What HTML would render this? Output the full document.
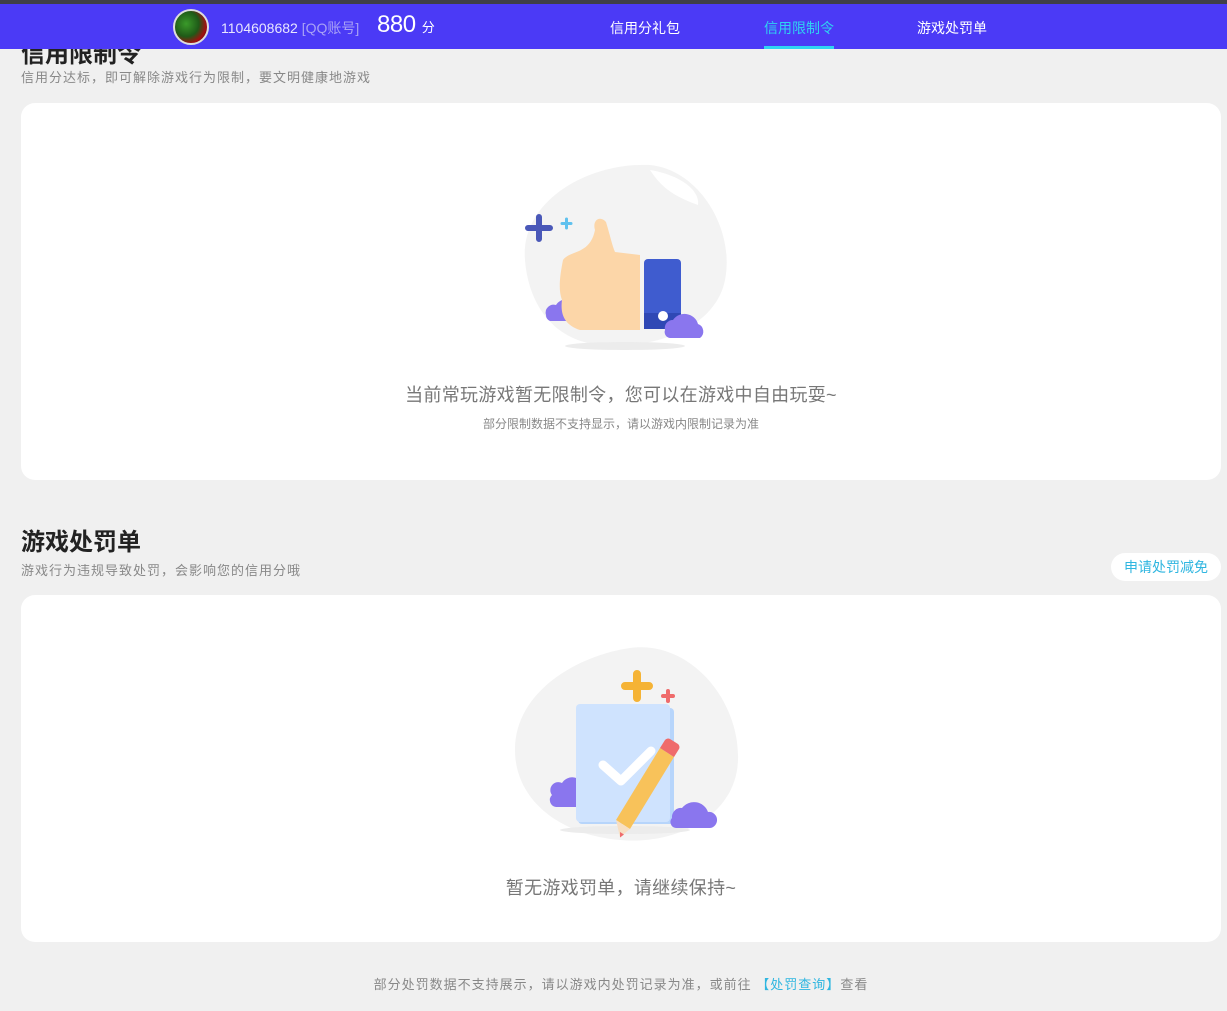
<!DOCTYPE html>
<html><head><meta charset="utf-8">
<style>
*{margin:0;padding:0;box-sizing:border-box}
body{width:1227px;height:1011px;background:#f0f0f0;font-family:"Liberation Sans","Noto Sans CJK SC",sans-serif;position:relative;overflow:hidden;color:#333}
.topbar{position:absolute;left:0;top:0;width:1227px;height:4px;background:#3f3f48;z-index:3}
.hdr{position:absolute;left:0;top:4px;width:1227px;height:45px;background:#4b3af6;z-index:2}
.av{position:absolute;left:173px;top:5px;width:36px;height:36px;border-radius:50%;border:2px solid #ddd;background:radial-gradient(circle at 35% 40%,#3a9a2a,#1f5a18 45%,#a01010 70%,#300 100%)}
.uid{position:absolute;left:221px;top:14px;font-size:14px;color:#e8e6ff}
.uid span{color:#a9a2f5}
.score{position:absolute;left:377px;top:7px;font-size:24px;color:#fff;letter-spacing:-0.5px}
.score small{font-size:13px}
.nav{position:absolute;top:14px;font-size:14px;color:#fff}
.nav.on{color:#2fd3f2}
.uline{position:absolute;left:764px;width:70px;height:3px;background:#2fd3f2}
.t1{position:absolute;left:21px;top:34px;font-size:24px;font-weight:bold;color:#222}
.sub{position:absolute;left:21px;font-size:13px;color:#888;letter-spacing:1px}
.card{position:absolute;left:21px;width:1200px;background:#fff;border-radius:14px}
.msg{position:absolute;width:1200px;left:21px;text-align:center;color:#777}
.btn{position:absolute;left:1111px;top:553px;width:110px;height:28px;border-radius:14px;background:#fff;color:#2fb6e0;font-size:14px;text-align:center;line-height:28px}
</style></head><body>
<div class="topbar"></div>
<div class="t1">信用限制令</div>
<div class="hdr">
  <div class="av"></div>
  <div class="uid">1104608682 <span>[QQ账号]</span></div>
  <div class="score">880 <small>分</small></div>
  <div class="nav" style="left:610px">信用分礼包</div>
  <div class="nav on" style="left:764px">信用限制令</div>
  <div class="nav" style="left:917px">游戏处罚单</div>
  <div class="uline" style="top:42px"></div>
</div>
<div class="sub" style="top:67px">信用分达标，即可解除游戏行为限制，要文明健康地游戏</div>
<div class="card" style="top:103px;height:377px"></div>
<svg style="position:absolute;left:500px;top:150px" width="240" height="210" viewBox="0 0 240 210">
  <path d="M25 110 C20 50 90 12 150 15 C200 20 235 80 225 130 C215 180 150 200 100 195 C50 190 28 150 25 110Z" fill="#f3f3f3"/>
  <path d="M150 20 C180 25 200 40 198 55 C170 45 160 35 150 20Z" fill="#fff"/>
  <ellipse cx="125" cy="196" rx="60" ry="4" fill="#ececec"/>
  <path d="M28 75 h8 v-8 a3 3 0 0 1 6 0 v8 h8 a3 3 0 0 1 0 6 h-8 v8 a3 3 0 0 1 -6 0 v-8 h-8 a3 3 0 0 1 0 -6z" fill="#4a58b8"/>
  <path d="M62 72 h3 v-3 a1.5 1.5 0 0 1 3 0 v3 h3 a1.5 1.5 0 0 1 0 3 h-3 v3 a1.5 1.5 0 0 1 -3 0 v-3 h-3 a1.5 1.5 0 0 1 0 -3z" fill="#5fc1ee"/>
  <path d="M46 165 a8 8 0 0 1 10 -10 a12 12 0 0 1 22 4 a7 7 0 0 1 0 12 h-28 a6 6 0 0 1 -4 -6z" fill="#8a76ee"/>
  <path d="M95 80 C92 70 100 65 106 72 C110 85 112 95 115 102 L140 105 L140 180 L80 180 C65 175 60 165 62 150 C58 140 60 125 63 110 C70 100 90 105 95 80Z" fill="#fcd6a8"/>
  <rect x="144" y="109" width="37" height="70" rx="4" fill="#3f5ccf"/>
  <rect x="144" y="163" width="37" height="16" fill="#2f48b5"/>
  <circle cx="163" cy="166" r="5" fill="#fff"/>
  <path d="M165 180 a8 8 0 0 1 8 -10 a14 14 0 0 1 25 4 a8 8 0 0 1 2 14 h-30 a6 6 0 0 1 -5 -8z" fill="#8a76ee"/>
</svg>
<div class="msg" style="top:381px;font-size:18px;letter-spacing:0.3px">当前常玩游戏暂无限制令，您可以在游戏中自由玩耍~</div>
<div class="msg" style="top:415px;font-size:12px;color:#888">部分限制数据不支持显示，请以游戏内限制记录为准</div>

<div style="position:absolute;left:21px;top:522px;font-size:24px;font-weight:bold;color:#222">游戏处罚单</div>
<div class="sub" style="top:560px">游戏行为违规导致处罚，会影响您的信用分哦</div>
<div class="btn">申请处罚减免</div>
<div class="card" style="top:595px;height:347px"></div>
<svg style="position:absolute;left:500px;top:640px" width="250" height="210" viewBox="0 0 250 210">
  <path d="M15 110 C15 50 80 15 130 8 C190 0 240 60 238 120 C236 180 170 205 120 200 C60 195 15 160 15 110Z" fill="#f3f3f3"/>
  <ellipse cx="125" cy="190" rx="65" ry="4" fill="#ececec"/>
  <path d="M125 42 h8 v-8 a4 4 0 0 1 8 0 v8 h8 a4 4 0 0 1 0 8 h-8 v8 a4 4 0 0 1 -8 0 v-8 h-8 a4 4 0 0 1 0 -8z" fill="#f5b335"/>
  <path d="M163 54 h3 v-3 a2 2 0 0 1 4 0 v3 h3 a2 2 0 0 1 0 4 h-3 v3 a2 2 0 0 1 -4 0 v-3 h-3 a2 2 0 0 1 0 -4z" fill="#ef6b6b"/>
  <path d="M52 155 a8 8 0 0 1 10 -12 a12 12 0 0 1 22 4 v20 h-28 a7 7 0 0 1 -4 -12z" fill="#8a76ee"/>
  <rect x="78" y="68" width="96" height="116" rx="4" fill="#b7d5fb"/>
  <rect x="76" y="64" width="94" height="118" rx="4" fill="#cfe3fe"/>
  <path d="M103 125 l18 16 l30 -30" stroke="#fff" stroke-width="9" fill="none" stroke-linecap="round" stroke-linejoin="round"/>
  <path d="M160 108 l14 9 l-44 72 l-14 -9z" fill="#f8c25a"/>
  <path d="M160 108 l5 -8 a4 4 0 0 1 5 -1 l8 5 a4 4 0 0 1 1 5 l-5 8z" fill="#ef6b6b"/>
  <path d="M116 180 l14 9 l-10 8z" fill="#f7dfc4"/>
  <path d="M120 192 l4 2.5 l-4 3z" fill="#ef6b6b"/>
  <path d="M172 178 a9 9 0 0 1 10 -10 a15 15 0 0 1 26 4 a8 8 0 0 1 2 16 h-34 a6 6 0 0 1 -4 -10z" fill="#8a76ee"/>
</svg>
<div class="msg" style="top:874px;font-size:18px;letter-spacing:0.3px">暂无游戏罚单，请继续保持~</div>
<div class="msg" style="top:974px;font-size:13px;color:#888;letter-spacing:1px">部分处罚数据不支持展示，请以游戏内处罚记录为准，或前往 <span style="color:#2fb6e0">【处罚查询】</span>查看</div>
</body></html>
